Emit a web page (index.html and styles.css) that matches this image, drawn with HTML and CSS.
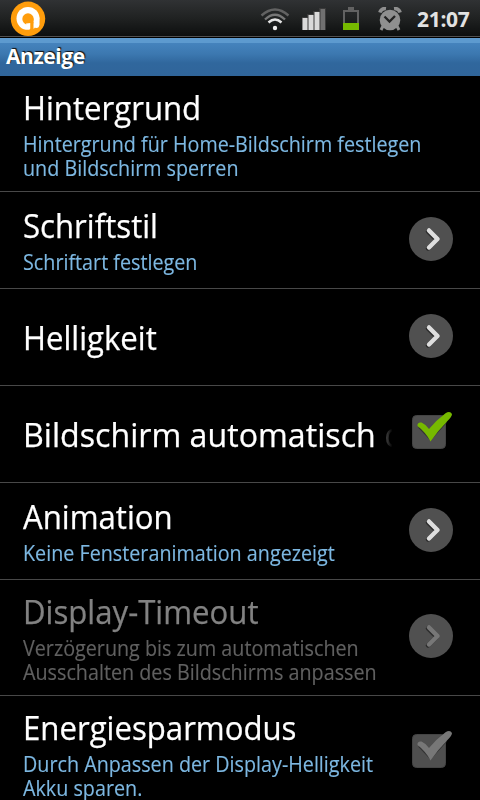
FILE: index.html
```html
<!DOCTYPE html>
<html lang="de">
<head>
<meta charset="utf-8">
<title>Anzeige</title>
<link rel="stylesheet" href="styles.css">
</head>
<body>
<svg class="defs" width="0" height="0">
  <defs>
    <symbol id="arrow" viewBox="0 0 44 46">
      <circle cx="22" cy="23" r="22" fill="#505050"/>
      <path class="arrow-shadow" d="M19 15.500l8.500 8.500-8.500 8.500"/>
      <path class="arrow-line" d="M20 14.500l8.500 8.500-8.500 8.500"/>
    </symbol>
    <symbol id="check" viewBox="0 0 44 44">
      <rect x="3.500" y="6.500" width="33" height="33" rx="4" fill="#4f4f4f" stroke="#444"/>
      <path class="check-shadow" d="M11 17l10.500 11L36 12"/>
      <path class="check-line" d="M8.500 17Q8 13 12.500 13.500Q17 15.500 20 20Q27 11.500 36.500 4.300Q41 1.500 43 5Q43 7.500 38 12.500Q29 21.500 21.500 32.500Q17 23.500 8.500 17Z"/>
    </symbol>
  </defs>
</svg>
<header class="status">
  <svg class="app" width="36" height="36" viewBox="0 0 36 36">
    <circle cx="18" cy="18.800" r="17.200" fill="#ff9d0c"/>
    <circle cx="18" cy="18.500" r="11.500" fill="#fff"/>
    <path d="M18 18.500H29.500V24Q29.500 27.800 26.500 28Q24 28 24 25V22L20.500 29.500L18 31Z" fill="#ff9d0c"/>
    <path d="M23.500 17.500H29.500V24.500Q29 28 26.500 28Q23.500 28 23.500 25Z" fill="#fff"/>
    <circle cx="18" cy="19" r="5.700" fill="#ff9d0c"/>
    <path d="M16 23.500L20.500 23V30.500L18 31Z" fill="#fff"/>
    <path d="M20.500 22H23.500V31H18L20.500 28.500ZM12 29.700H20.500V32H12Z" fill="#ff9d0c"/>
  </svg>
  <div class="tray">
    <svg width="30" height="24" viewBox="0 0 30 24" fill="none" stroke-width="2.400">
      <path d="M1.500 8.500Q15-3.500 28.500 8.500" stroke="#626262"/>
      <path d="M5 12.500Q15 3 25 12.500" stroke="#777"/>
      <path d="M8.500 15.500Q15 9.500 21.500 15.500" stroke="#e4e4e4"/>
      <circle cx="15" cy="21" r="2.200" fill="#eee"/>
    </svg>
    <svg class="signal" width="24" height="24" viewBox="0 0 24 24">
      <path d="M0 10h5V7h6V4h6V1h7v22H0Z" fill="#3a3a3a"/>
      <path d="M.5 11h5v12h-5zM6.500 8h5v15h-5zM12.500 5h5v18h-5z" fill="#d9d9d9"/>
      <path d="M18.500 2h4.500v21h-4.500z" fill="#707070"/>
    </svg>
    <svg class="battery" width="16" height="24" viewBox="0 0 16 24">
      <path d="M1 23V4H15V23" fill="none" stroke="#626262" stroke-width="2"/>
      <path d="M5 0h6v3H5z" fill="#626262"/>
      <path d="M0 16h16v7H0z" fill="#76b900"/>
    </svg>
    <svg class="alarm" width="24" height="24" viewBox="0 0 24 24">
      <path d="M5 19L3 23M19 19L21 23" stroke="#8f8f8f" stroke-width="3"/>
      <circle cx="12" cy="13" r="10.300" fill="#8f8f8f"/>
      <path d="M1.800 5.500Q3.500 1 8 1.500M22.200 5.500Q20.500 1 16 1.500" fill="none" stroke="#8f8f8f" stroke-width="3.500"/>
      <path d="M6.500 9.500L11.500 14.500L17 9" fill="none" stroke="#222" stroke-width="2.300"/>
    </svg>
    <time class="clock">21:07</time>
  </div>
</header>
<h1 class="bar">Anzeige</h1>
<main>
  <section class="row tall">
    <div class="text"><h2>Hintergrund</h2><p>Hintergrund für Home-Bildschirm festlegen<br>und Bildschirm sperren</p></div>
  </section>
  <section class="row">
    <div class="text"><h2>Schriftstil</h2><p>Schriftart festlegen</p></div>
    <svg class="arrow" width="44" height="46"><use href="#arrow"/></svg>
  </section>
  <section class="row">
    <div class="text"><h2>Helligkeit</h2></div>
    <svg class="arrow" width="44" height="46"><use href="#arrow"/></svg>
  </section>
  <section class="row">
    <div class="text clipped"><h2>Bildschirm automatisch <span class="fade">d</span></h2></div>
    <svg class="check" width="44" height="44"><use href="#check"/></svg>
  </section>
  <section class="row">
    <div class="text"><h2>Animation</h2><p>Keine Fensteranimation angezeigt</p></div>
    <svg class="arrow" width="44" height="46"><use href="#arrow"/></svg>
  </section>
  <section class="row tall disabled">
    <div class="text"><h2>Display-Timeout</h2><p>Verzögerung bis zum automatischen<br>Ausschalten des Bildschirms anpassen</p></div>
    <svg class="arrow" width="44" height="46"><use href="#arrow"/></svg>
  </section>
  <section class="row tall">
    <div class="text"><h2>Energiesparmodus</h2><p>Durch Anpassen der Display-Helligkeit<br>Akku sparen.</p></div>
    <svg class="check off" width="44" height="44"><use href="#check"/></svg>
  </section>
</main>
</body>
</html>
```
FILE: styles.css
```css
* { box-sizing: border-box; margin: 0; padding: 0; }
html { height: 100%; overflow: hidden; }
body {
  width: 480px;
  height: 800px;
  overflow: hidden;
  background: #000;
  color: #fff;
  font-family: "Open Sans", "Noto Sans", sans-serif;
}
svg { display: block; flex: none; }
.defs { height: 0; }
.status {
  display: flex;
  justify-content: space-between;
  height: 38px;
  padding: 0 9px 0 10px;
  background: linear-gradient(#303234, #202222 50%, #0d0f0f);
  background-size: 100% 36px;
  background-repeat: no-repeat;
  box-shadow: inset 0 -1px #000, inset 0 -2px #505050;
}
.tray { display: flex; align-items: flex-start; padding-top: 7px; }
.signal { margin-left: 12px; }
.battery { margin-left: 17px; }
.alarm { margin-left: 19px; }
.clock {
  width: 54px;
  margin-left: 15px;
  font-size: 21px;
  font-weight: 700;
  line-height: 25px;
  letter-spacing: -0.3px;
  color: #e2e2e2;
  white-space: nowrap;
}
.bar {
  height: 38px;
  padding-left: 6px;
  font-size: 21px;
  font-weight: 700;
  line-height: 37px;
  letter-spacing: -0.4px;
  text-shadow: 1px -1px 1px #111;
  background: linear-gradient(#5d9acf 0 5px, #4583bd 5px, #3c78b0 16px, #30679d 25px, #30659a);
}
.row {
  display: flex;
  align-items: center;
  justify-content: space-between;
  height: 97px;
  padding: 0 27px 0 23px;
  border-bottom: 1px solid #484848;
}
.tall { height: 116px; }
.text { width: 369px; white-space: nowrap; }
h2, p { width: max-content; transform-origin: left; }
h2 {
  font-size: 33px;
  font-weight: 400;
  line-height: 39px;
  transform: scaleX(.944);
  -webkit-text-stroke: .25px;
}
p {
  margin-top: 5px;
  font-size: 21.500px;
  line-height: 24px;
  color: #7db8e2;
  transform: scaleX(.918);
  -webkit-text-stroke: .15px;
}
.clipped { overflow: hidden; }
.clipped h2 { transform: scaleX(.975); }
.fade {
  background: linear-gradient(90deg, #555, #000 9px);
  -webkit-background-clip: text;
  background-clip: text;
  color: transparent;
  -webkit-text-stroke: 0;
}
.row > svg { margin-left: -10px; }
.arrow { margin-bottom: 3px; }
.arrow-shadow, .arrow-line {
  fill: none;
  stroke-width: 4.500;
  stroke-linecap: round;
  stroke-linejoin: round;
}
.arrow-shadow { stroke: #2c2c2c; }
.arrow-line { stroke: var(--arrow, #dedede); }
.check { margin-bottom: 7px; --mark: #76b900; }
.check-shadow { fill: none; stroke: #333; stroke-width: 5; }
.check-line { fill: var(--mark); }
.off { --mark: #777; margin-bottom: 8px; }
.disabled { --arrow: #777; }
.disabled h2 { color: #828282; }
.disabled p { color: #606060; }
```
